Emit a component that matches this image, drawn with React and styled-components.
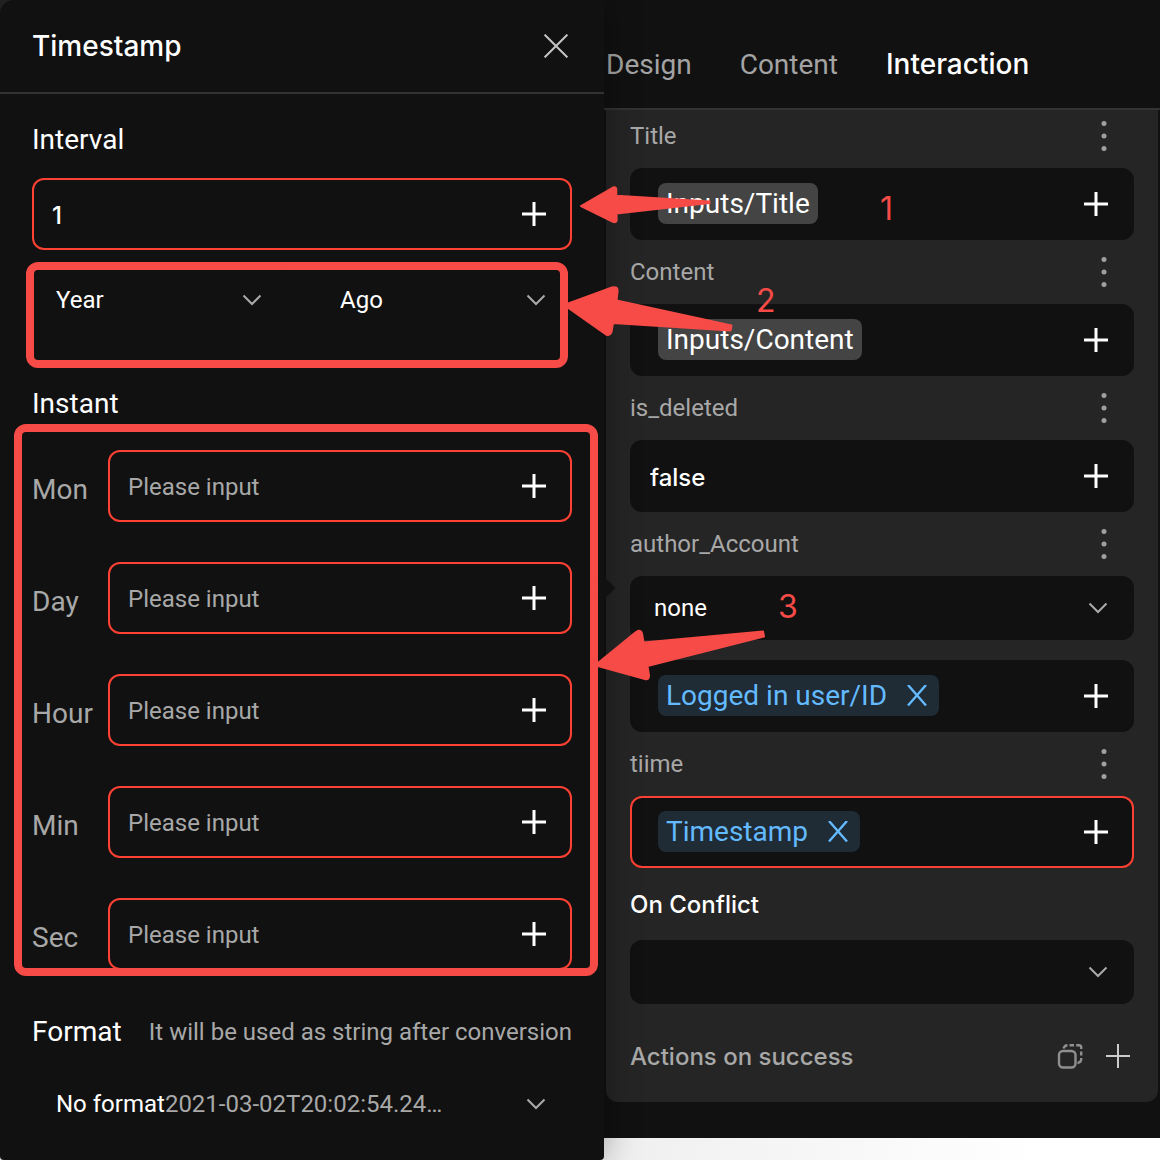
import React from "react";
import styled, { createGlobalStyle } from "styled-components";

const c = {
  panel: "#111111",
  card: "#252525",
  line: "#333333",
  text: "#ffffff",
  muted: "#a8a8a8",
  error: "#ff4133",
  mark: "#f74b47",
  link: "#64baff",
  linkBg: "#1f2b35",
  tagBg: "#444444",
};

const strongFont = `Inter, Roboto, "Liberation Sans", sans-serif`;

const Global = createGlobalStyle`
  *, *::before, *::after { box-sizing: border-box; }
  body {
    margin: 0;
    background: #ffffff;
    font-family: Roboto, "Liberation Sans", sans-serif;
    font-size: 24px;
    color: ${c.text};
  }
  button, input, select { font: inherit; color: inherit; }
`;

const Page = styled.div`
  position: relative;
  display: grid;
  grid-template-columns: 604px minmax(0, 1fr);
  min-height: 100vh;
  overflow: hidden;
  background: linear-gradient(to right, #f0f0f0 640px, #ffffff 1040px);
`;

const PopoverColumn = styled.div`
  display: flex;
  z-index: 1;
  background: linear-gradient(${c.card} 14px, transparent 14px);
`;

const Popover = styled.section`
  position: relative;
  flex: 1;
  background: ${c.panel};
  border-radius: 14px 0 4px 4px;
  box-shadow: 0 0 36px rgba(0, 0, 0, 0.36);

  &::after {
    content: "";
    position: absolute;
    top: 580px;
    right: -8px;
    width: 16px;
    height: 16px;
    background: ${c.panel};
    transform: rotate(45deg);
  }
`;

const PopoverHeader = styled.header`
  display: flex;
  align-items: center;
  justify-content: space-between;
  height: 94px;
  padding: 0 32px;
  border-bottom: 2px solid ${c.line};
`;

const PopoverTitle = styled.h2`
  margin: 0;
  font-family: ${strongFont};
  font-size: 28px;
  font-weight: 500;
`;

const PopoverBody = styled.div`
  display: flex;
  flex-direction: column;
  padding: 28px 32px 24px;
`;

const Heading = styled.h3`
  margin: ${(p) => p.$margin || "0 0 20px"};
  font-size: 28px;
  font-weight: 400;
  line-height: 36px;
`;

const IconButton = styled.button`
  display: flex;
  align-items: center;
  justify-content: center;
  flex: none;
  width: ${(p) => p.$w || 32}px;
  height: 32px;
  padding: 0;
  border: 0;
  background: none;
  cursor: pointer;
`;

const Field = styled.div`
  display: flex;
  align-items: center;
  flex: 1 1 auto;
  min-width: 0;
  height: 72px;
  padding: 0 20px 0 ${(p) => (p.$tags ? 26 : 18)}px;
  border: 2px solid ${(p) => (p.$error ? c.error : c.panel)};
  border-radius: 12px;
  background: ${c.panel};
`;

const Spacer = styled.span`
  flex: 1;
`;

const TextInput = styled.input`
  flex: 1;
  min-width: 0;
  padding: 2px 0 0;
  border: 0;
  outline: 0;
  background: none;
  font-family: ${strongFont};
  font-weight: 500;

  &:placeholder-shown {
    font-family: Roboto, "Liberation Sans", sans-serif;
  }

  &::placeholder {
    color: ${c.muted};
    font-weight: 400;
    opacity: 1;
  }
`;

const SelectPair = styled.div`
  display: grid;
  grid-template-columns: 1fr 1fr;
  gap: 28px;
  margin-top: 18px;
`;

const SelectBox = styled.div`
  display: flex;
  align-items: center;
  height: 64px;
  padding: 0 26px 0 24px;
  border-radius: 12px;
  background: ${c.panel};
`;

const NativeSelect = styled.select`
  appearance: none;
  flex: ${(p) => (p.$hug ? "none" : 1)};
  field-sizing: ${(p) => (p.$hug ? "content" : "fixed")};
  min-width: 0;
  height: 32px;
  padding: 0;
  border: 0;
  outline: 0;
  background: none;
`;

const Sample = styled.span`
  margin-right: auto;
  color: ${c.muted};
  white-space: nowrap;
`;

const InstantList = styled.div`
  display: flex;
  flex-direction: column;
  gap: 40px;
`;

const InstantRow = styled.label`
  display: flex;
  align-items: center;
`;

const InstantName = styled.span`
  width: 76px;
  padding-top: 6px;
  color: ${c.muted};
  font-size: 28px;
`;

const FormatRow = styled.div`
  display: flex;
  align-items: center;
  justify-content: space-between;
  margin: 44px 0 22px;
`;

const Hint = styled.span`
  color: ${c.muted};
  white-space: nowrap;
`;

const Side = styled.main`
  align-self: start;
  min-width: 0;
  padding-bottom: 36px;
  background: ${c.panel};
`;

const Tabs = styled.nav`
  display: flex;
  align-items: center;
  gap: 48px;
  height: 110px;
  padding: 20px 2px 0;
  border-bottom: 2px solid ${c.line};
`;

const Tab = styled.a`
  color: ${(p) => (p.$active ? c.text : "#a3a3a3")};
  font-family: ${(p) => (p.$active ? strongFont : "inherit")};
  font-size: 28px;
  font-weight: ${(p) => (p.$active ? 500 : 400)};
  text-decoration: none;
`;

const Card = styled.div`
  display: flex;
  flex-direction: column;
  gap: 16px;
  margin: 0 2px;
  padding: 10px 24px 30px;
  border-radius: 0 0 12px 12px;
  background: ${c.card};
`;

const Group = styled.div`
  display: flex;
  flex-direction: column;
  gap: 16px;
`;

const Stack = styled.div`
  display: flex;
  flex-direction: column;
  gap: 20px;
`;

const LabelRow = styled.div`
  display: flex;
  align-items: center;
  justify-content: space-between;
  height: 32px;
  padding-right: 14px;
`;

const Label = styled.label`
  color: ${(p) => (p.$strong ? c.text : c.muted)};
  font-family: ${(p) => (p.$strong ? strongFont : "inherit")};
  font-weight: ${(p) => (p.$strong ? 500 : 400)};
`;

const ActionsRow = styled.div`
  display: flex;
  align-items: center;
  height: 32px;
  margin-top: 20px;
  color: ${c.muted};
  font-family: ${strongFont};
  font-weight: 500;
`;

const ActionButtons = styled.div`
  display: flex;
  gap: 16px;
  margin-left: auto;
`;

const Tag = styled.span`
  display: flex;
  align-items: center;
  gap: 20px;
  height: 41px;
  margin-bottom: 1px;
  padding: 0 ${(p) => (p.$link ? 12 : 8)}px 0 8px;
  border-radius: 8px;
  background: ${(p) => (p.$link ? c.linkBg : c.tagBg)};
  color: ${(p) => (p.$link ? c.link : c.text)};
  font-size: 28px;
  white-space: nowrap;
`;

const Marks = styled.div`
  position: absolute;
  inset: 0;
  z-index: 2;
  pointer-events: none;
`;

const Frame = styled.div`
  position: absolute;
  left: ${(p) => p.$x}px;
  top: ${(p) => p.$y}px;
  width: ${(p) => p.$w}px;
  height: ${(p) => p.$h}px;
  border: 8px solid ${c.mark};
  border-radius: 12px;
`;

const Arrows = styled.svg`
  position: absolute;
  left: 0;
  top: 0;
  fill: ${c.mark};
  stroke: ${c.mark};
  stroke-width: 2;
  stroke-linejoin: round;
`;

const Num = styled.span`
  position: absolute;
  left: ${(p) => p.$x}px;
  top: ${(p) => p.$y}px;
  color: ${c.mark};
  font-family: ${strongFont};
  font-size: 32px;
  line-height: 36px;
`;

const Plus = ({ thin }) => (
  <svg width="24" height="24" viewBox="0 0 24 24" fill="none" aria-hidden="true"
    stroke={thin ? "#cccccc" : "#ffffff"} strokeWidth={thin ? 2 : 3}>
    <path d="M12 0V24M0 12H24" />
  </svg>
);

const Chevron = () => (
  <svg width="20" height="12" viewBox="0 0 20 12" fill="none" stroke="#aaaaaa" strokeWidth="2" aria-hidden="true">
    <path d="M1.500 1.500L10 10L18.500 1.500" />
  </svg>
);

const Close = () => (
  <svg width="24" height="24" viewBox="0 0 24 24" fill="none" stroke="#c4c4c4" strokeWidth="2" aria-hidden="true">
    <path d="M0.600 0.600L23.400 23.400M23.400 0.600L0.600 23.400" />
  </svg>
);

const Cross = () => (
  <svg width="20" height="22" viewBox="0 0 20 22" fill="none" stroke={c.link} strokeWidth="2.400" aria-hidden="true">
    <path d="M1 0L19 20.500M19 0L1 20.500" />
  </svg>
);

const Dots = () => (
  <svg width="6" height="30" viewBox="0 0 6 30" fill="#a0a0a0" aria-hidden="true">
    <circle cx="3" cy="2.500" r="2.500" />
    <circle cx="3" cy="15" r="2.500" />
    <circle cx="3" cy="27.500" r="2.500" />
  </svg>
);

const Copy = () => (
  <svg width="26" height="26" viewBox="0 0 26 26" fill="none" stroke="#8f8f8f" strokeWidth="2.400" aria-hidden="true">
    <rect x="2" y="8" width="16.500" height="16.500" rx="4" />
    <path d="M6.500 5.500Q7.500 2.300 10.500 2.200M12.500 2.200H17M19.200 2.200H22Q24 2.200 24.200 4V6M24.200 8.500V12.500M24.200 15V16.500Q24 19.500 20.500 20" />
  </svg>
);

const AddButton = () => (
  <IconButton type="button" aria-label="Add"><Plus /></IconButton>
);

const LabelWithMenu = ({ htmlFor, id, children }) => (
  <LabelRow>
    <Label as={htmlFor ? "label" : "span"} htmlFor={htmlFor} id={id}>{children}</Label>
    <IconButton type="button" aria-label="More"><Dots /></IconButton>
  </LabelRow>
);

const LinkTag = ({ children }) => (
  <Tag $link>
    {children}
    <IconButton type="button" aria-label="Remove" $w={20}><Cross /></IconButton>
  </Tag>
);

const TagField = ({ labelledBy, error, children }) => (
  <Field $tags $error={error} role="group" aria-labelledby={labelledBy}>
    {children}
    <Spacer />
    <AddButton />
  </Field>
);

const units = ["Mon", "Day", "Hour", "Min", "Sec"];

export default function App() {
  return (
    <>
      <Global />
      <Page>
        <PopoverColumn>
          <Popover>
            <PopoverHeader>
              <PopoverTitle>Timestamp</PopoverTitle>
              <IconButton type="button" aria-label="Close"><Close /></IconButton>
            </PopoverHeader>
            <PopoverBody>
              <Heading>Interval</Heading>
              <Field $error>
                <TextInput aria-label="Interval" defaultValue="1" />
                <AddButton />
              </Field>
              <SelectPair>
                <SelectBox>
                  <NativeSelect aria-label="Unit"><option>Year</option></NativeSelect>
                  <Chevron />
                </SelectBox>
                <SelectBox>
                  <NativeSelect aria-label="Direction"><option>Ago</option></NativeSelect>
                  <Chevron />
                </SelectBox>
              </SelectPair>
              <Heading $margin="54px 0 28px">Instant</Heading>
              <InstantList>
                {units.map((u) => (
                  <InstantRow key={u}>
                    <InstantName>{u}</InstantName>
                    <Field $error>
                      <TextInput aria-label={u} placeholder="Please input" />
                      <AddButton />
                    </Field>
                  </InstantRow>
                ))}
              </InstantList>
              <FormatRow>
                <Heading $margin="0">Format</Heading>
                <Hint>It will be used as string after conversion</Hint>
              </FormatRow>
              <SelectBox>
                <NativeSelect $hug aria-label="Format"><option>No format</option></NativeSelect>
                <Sample>2021-03-02T20:02:54.24…</Sample>
                <Chevron />
              </SelectBox>
            </PopoverBody>
          </Popover>
        </PopoverColumn>

        <Side>
          <Tabs>
            <Tab href="#design">Design</Tab>
            <Tab href="#content">Content</Tab>
            <Tab href="#interaction" $active>Interaction</Tab>
          </Tabs>
          <Card>
            <Group>
              <LabelWithMenu id="l-title">Title</LabelWithMenu>
              <TagField labelledBy="l-title"><Tag>Inputs/Title</Tag></TagField>
            </Group>
            <Group>
              <LabelWithMenu id="l-content">Content</LabelWithMenu>
              <TagField labelledBy="l-content"><Tag>Inputs/Content</Tag></TagField>
            </Group>
            <Group>
              <LabelWithMenu htmlFor="deleted">is_deleted</LabelWithMenu>
              <Field>
                <TextInput id="deleted" defaultValue="false" />
                <AddButton />
              </Field>
            </Group>
            <Group>
              <LabelWithMenu htmlFor="author" id="l-author">author_Account</LabelWithMenu>
              <Stack>
                <SelectBox>
                  <NativeSelect id="author"><option>none</option></NativeSelect>
                  <Chevron />
                </SelectBox>
                <TagField labelledBy="l-author"><LinkTag>Logged in user/ID</LinkTag></TagField>
              </Stack>
            </Group>
            <Group>
              <LabelWithMenu id="l-time">tiime</LabelWithMenu>
              <Stack>
                <TagField error labelledBy="l-time"><LinkTag>Timestamp</LinkTag></TagField>
                <LabelRow>
                  <Label htmlFor="conflict" $strong>On Conflict</Label>
                </LabelRow>
                <SelectBox>
                  <NativeSelect id="conflict"><option></option></NativeSelect>
                  <Chevron />
                </SelectBox>
              </Stack>
            </Group>
            <ActionsRow>
              Actions on success
              <ActionButtons>
                <IconButton type="button" aria-label="Copy"><Copy /></IconButton>
                <IconButton type="button" aria-label="Add action"><Plus thin /></IconButton>
              </ActionButtons>
            </ActionsRow>
          </Card>
        </Side>

        <Marks>
          <Frame $x={26} $y={262} $w={542} $h={106} />
          <Frame $x={14} $y={424} $w={584} $h={552} />
          <Arrows width="800" height="700" viewBox="0 0 800 700" aria-hidden="true">
            <path d="M581 206L613 187.500Q616 186.500 616.300 189V195.800L709.500 201.500V203L616.500 213.500L616.700 220Q616.500 223 613 221.800Z" />
            <path d="M567 304L612 287.500Q618 286 617.600 291L616.500 300.500L731.500 325.500L730.500 330.500L613 323L611.500 332Q610 336 606 334.500L567 307Z" />
            <path d="M598 663L636 632Q641 629 642 633.500L643.500 642.500L763 631.500L764 636.500L647.500 666L649 675.500Q649 680 645 679L598 666Z" />
          </Arrows>
          <Num $x={880} $y={191}>1</Num>
          <Num $x={756} $y={283}>2</Num>
          <Num $x={778} $y={589}>3</Num>
        </Marks>
      </Page>
    </>
  );
}
